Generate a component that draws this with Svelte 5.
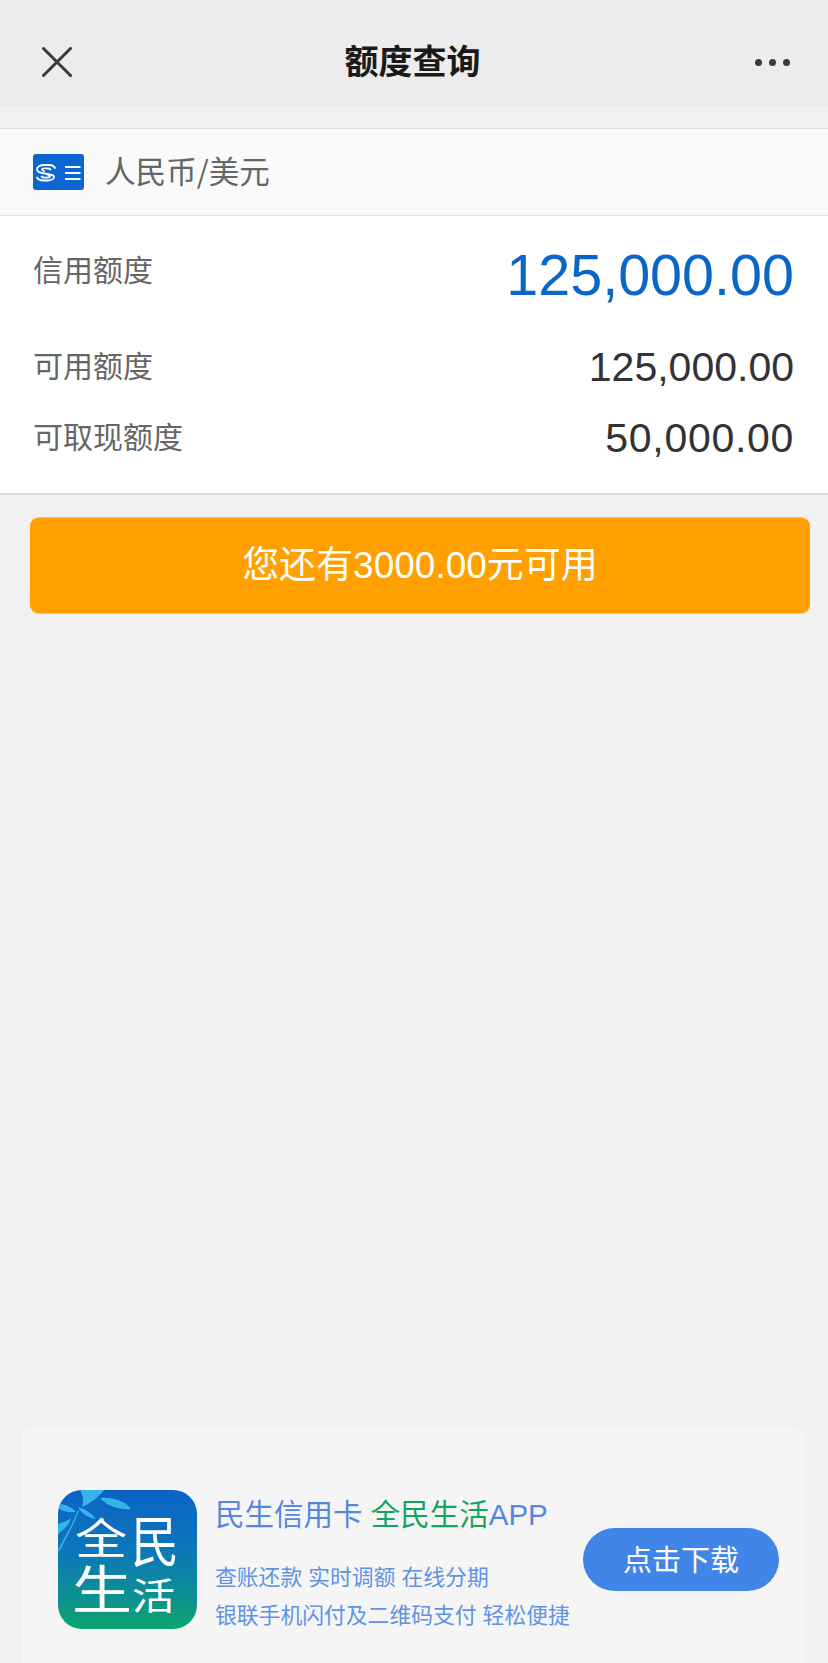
<script>
  const limits = [
    { label: '可用额度', value: '125,000.00', wide: false },
    { label: '可取现额度', value: '50,000.00', wide: true },
  ];
</script>

<div class="page">
  <header class="nav">
    <svg class="close" width="30" height="30" viewBox="0 0 30 30" fill="none" stroke="#3a3a3a" stroke-width="3" stroke-linecap="round">
      <path d="M1.5 1.5l27 27M28.5 1.5l-27 27" />
    </svg>
    <h1>额度查询</h1>
    <div class="dots"><i></i><i></i><i></i></div>
  </header>

  <div class="card-row">
    <svg class="bank" width="51" height="36" viewBox="0 0 51 36">
      <rect width="51" height="36" rx="3" fill="#0a66d0" />
      <g fill="none" stroke="#fff" stroke-width="1.800" stroke-linecap="round">
        <path d="M22 14c-1-2-3.500-3-6-3h-5c-4 0-7 1.800-7 4.200 0 2 2 3.300 5 3.800l8 1.500c2.500.5 4 1.300 4 2.600 0 2-3 3.400-6.500 3.400h-4c-3 0-5.500-1-6.500-3" />
        <path d="M17.500 15.500c-.8-.8-2-1.200-3.500-1.200h-2c-1.800 0-3 .5-3 1.300 0 .7.8 1.100 2 1.400" />
        <path d="M15 21c1 .3 2 .7 2 1.300 0 .8-1.300 1.300-3 1.300h-2c-1.500 0-2.700-.4-3.500-1.100" />
      </g>
      <path d="M32 13h15.500M32 19h15.500M32 25h15.500" stroke="#fff" stroke-width="2" />
    </svg>
    <span>人民币/美元</span>
  </div>

  <section class="limits">
    <div class="row first">
      <span class="label">信用额度</span>
      <span class="total">125,000.00</span>
    </div>
    {#each limits as item}
      <div class="row">
        <span class="label">{item.label}</span>
        <span class="value" class:wide={item.wide}>{item.value}</span>
      </div>
    {/each}
  </section>

  <button class="available">您还有3000.00元可用</button>

  <aside class="promo">
    <svg class="logo" width="139" height="139" viewBox="0 0 139 139">
      <defs>
        <linearGradient id="logoBg" x1="0" y1="0" x2="0" y2="1">
          <stop offset="0" stop-color="#0a62c6" />
          <stop offset="0.45" stop-color="#0c78b8" />
          <stop offset="0.75" stop-color="#0d8f94" />
          <stop offset="1" stop-color="#0ba56c" />
        </linearGradient>
        <clipPath id="logoClip"><rect width="139" height="139" rx="24" /></clipPath>
      </defs>
      <g clip-path="url(#logoClip)">
        <rect width="139" height="139" fill="url(#logoBg)" />
        <g fill="#35b4ec">
          <path d="M42 8c13-1 25 3 31 11-12 1-24-3-31-11z" />
          <path d="M22 0h24c-5 7-13 13-22 17 2-6 1-12-2-17z" />
          <path d="M20 17c8 2 14 7 18 12-8-1-15-6-18-12z" />
          <path d="M0 14c7 0 14 3 18 8-6 1-13 0-18-4z" />
          <path d="M14 34l6-14 1 1-6 14-14 27-1-2z" />
          <path d="M0 34c5-2 9-3 13-6-1 6-6 11-13 16z" />
        </g>
        <g fill="#fff" font-family="'Noto Sans CJK SC', sans-serif" font-weight="400">
          <text transform="translate(17 64) scale(1.04 .84)" font-size="50">全</text>
          <text transform="translate(73 72) scale(1 1.15)" font-size="48">民</text>
          <text transform="translate(14 119) scale(1 .88)" font-size="60">生</text>
          <text transform="translate(74 120) scale(1 .86)" font-size="43">活</text>
        </g>
      </g>
    </svg>

    <div class="promo-text">
      <p class="promo-title">民生信用卡 <em>全民生活</em>APP</p>
      <p class="promo-line">查账还款 实时调额 在线分期</p>
      <p class="promo-line">银联手机闪付及二维码支付 轻松便捷</p>
    </div>

    <button class="download">点击下载</button>
  </aside>
</div>

<style>
  :global(body) {
    margin: 0;
    background: #f1f1f1;
  }

  .page {
    display: flex;
    flex-direction: column;
    height: 1663px;
    overflow: hidden;
    font-family: "Liberation Sans", "Noto Sans CJK SC", sans-serif;
  }

  .nav {
    display: flex;
    align-items: center;
    justify-content: space-between;
    height: 106px;
    box-sizing: border-box;
    padding: 0 38px 0 42px;
    background: #ececec;
  }

  .close {
    margin-top: 18px;
  }

  h1 {
    margin: 12px 0 0 -2px;
    font-size: 34px;
    font-weight: 700;
    color: #1a1a1a;
  }

  .dots {
    display: flex;
    gap: 7px;
    margin-top: 18px;
  }

  .dots i {
    width: 7px;
    height: 7px;
    border-radius: 50%;
    background: #3a3a3a;
  }

  .card-row {
    display: flex;
    align-items: center;
    gap: 21px;
    height: 88px;
    box-sizing: border-box;
    margin-top: 22px;
    padding-left: 33px;
    background: #fafafa;
    border-top: 1px solid #e2e2e2;
    border-bottom: 1px solid #e6e6e6;
    font-family: "Noto Sans CJK SC", sans-serif;
    font-size: 30.600px;
    color: #666;
  }

  .card-row span {
    padding-bottom: 4px;
  }

  .limits {
    height: 279px;
    box-sizing: border-box;
    padding: 24px 34px 0 33px;
    background: #fff;
    border-bottom: 2px solid #dcdcdc;
  }

  .row {
    display: flex;
    align-items: center;
    justify-content: space-between;
    height: 71px;
  }

  .row.first {
    height: 76px;
    margin-bottom: 14px;
  }

  .label {
    padding-bottom: 4px;
    font-size: 30px;
    color: #666;
  }

  .first .label {
    margin-top: -17px;
  }

  .total {
    margin-top: -6px;
    font-size: 57.500px;
    color: #0a66c8;
  }

  .value {
    padding-top: 4px;
    font-size: 41px;
    color: #333;
  }

  .value.wide {
    letter-spacing: 0.7px;
  }

  .available {
    height: 97px;
    margin: 22px 18px 0 30px;
    padding: 0 0 8px;
    background: #ffa000;
    border: 0;
    border-top: 1px solid #ffc25a;
    border-bottom: 1px solid #ffc25a;
    border-radius: 9px;
    font: inherit;
    font-size: 37px;
    color: #fff;
  }

  .promo {
    display: flex;
    align-items: center;
    flex: none;
    height: 235px;
    box-sizing: border-box;
    margin: auto 23px 0 22px;
    padding: 24px 26px 0 36px;
    background: #f5f5f5;
    border-radius: 8px 8px 0 0;
  }

  .logo {
    flex: none;
    margin-top: 3px;
  }

  .promo-text {
    flex: 1;
    margin: 0 0 0 18px;
    padding-top: 10.500px;
  }

  p {
    margin: 0;
    white-space: nowrap;
  }

  .promo-title {
    margin: 0 0 25.500px;
    font-size: 29.500px;
    color: #5588dc;
  }

  em {
    font-style: normal;
    color: #14a460;
  }

  .promo-line {
    font-size: 21.800px;
    line-height: 38px;
    color: #5f93e4;
  }

  .download {
    flex: none;
    width: 196px;
    height: 63px;
    margin-top: 4px;
    padding: 0 0 4px;
    background: #4285e8;
    border: 0;
    border-radius: 32px;
    font: inherit;
    font-size: 29px;
    color: #fff;
  }
</style>
